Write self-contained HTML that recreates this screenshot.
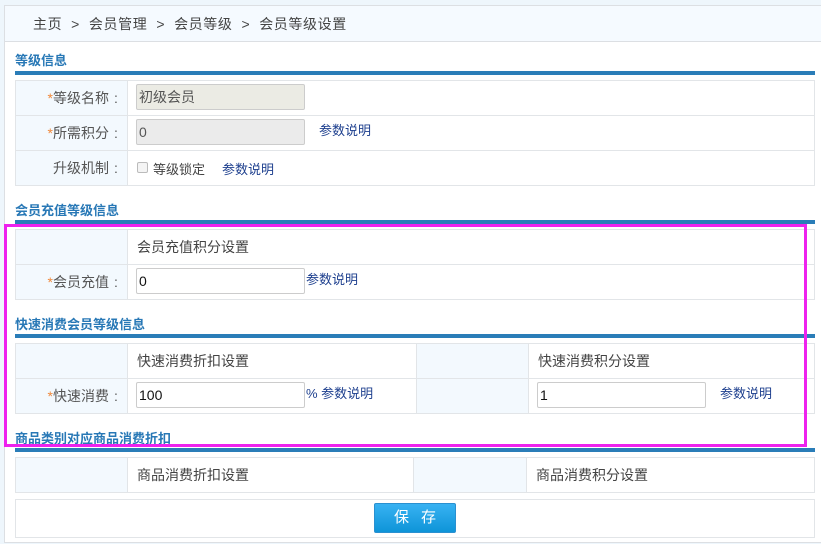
<!DOCTYPE html>
<html><head><meta charset="utf-8"><style>
*{margin:0;padding:0;box-sizing:border-box}
body{width:821px;height:544px;background:#eef6fc;position:relative;overflow:hidden;font-family:"Liberation Sans","Noto Sans CJK SC",sans-serif;font-size:14px;color:#444}
.a{position:absolute}
.panel{left:4px;top:5px;width:830px;height:538px;background:#fff;border:1px solid #dcdfe3}
.bc{left:5px;top:6px;width:830px;height:36px;background:#f5faff;border-bottom:1px solid #dcdfe3;font-size:14px;color:#444;line-height:36px;padding-left:28px;letter-spacing:0.6px}
.st{left:15px;font-weight:bold;color:#2878b6;font-size:13px}
.bar{left:15px;width:800px;height:4px;background:#2a7db8}
.c{border:1px solid #e2e5e8;background:#fff}
.l{background:#f3f9fe}
.lbl{text-align:right;padding-right:4px;color:#555;font-size:14px}
.co{display:inline-block;width:14px;text-align:center}
.s{color:#f0883a}
.in{border:1px solid #ccc;border-radius:2px;background:#fff;height:26px;line-height:24px;padding-left:2px;color:#111;font-size:14px}
.lk{color:#1d3f8e;font-size:13px}
.btn{left:374px;top:503px;width:82px;height:30px;background:linear-gradient(#38b2f2,#0e94d8);border:1px solid #2a90d0;border-radius:2px;color:#fff;font-size:15px;text-align:center;line-height:28px;letter-spacing:12px;padding-left:12px}
.mag{left:4px;top:224px;width:803px;height:223px;border:3px solid #ee22ee}
</style></head><body>
<div class="a panel"></div>
<div class="a bc">主页 &nbsp;&gt;&nbsp; 会员管理 &nbsp;&gt;&nbsp; 会员等级 &nbsp;&gt;&nbsp; 会员等级设置</div>

<div class="a st" style="top:50px">等级信息</div>
<div class="a bar" style="top:71px"></div>
<div class="a c l lbl" style="left:15px;top:80px;width:113px;height:36px;line-height:34px"><span class="s">*</span>等级名称<span class="co">:</span></div>
<div class="a c" style="left:127px;top:80px;width:688px;height:36px"></div>
<div class="a in" style="left:136px;top:84px;width:169px;background:#ebebe4;color:#555">初级会员</div>
<div class="a c l lbl" style="left:15px;top:115px;width:113px;height:36px;line-height:34px"><span class="s">*</span>所需积分<span class="co">:</span></div>
<div class="a c" style="left:127px;top:115px;width:688px;height:36px"></div>
<div class="a in" style="left:136px;top:119px;width:169px;background:#ebebeb;color:#555">0</div>
<div class="a lk" style="left:319px;top:120px">参数说明</div>
<div class="a c l lbl" style="left:15px;top:150px;width:113px;height:36px;line-height:34px">升级机制<span class="co">:</span></div>
<div class="a c" style="left:127px;top:150px;width:688px;height:36px"></div>
<div class="a" style="left:137px;top:162px;width:11px;height:11px;border:1px solid #bbb;border-radius:2px;background:#f4f4f4"></div>
<div class="a" style="left:153px;top:159px;font-size:13px">等级锁定</div>
<div class="a lk" style="left:222px;top:159px">参数说明</div>

<div class="a st" style="top:200px">会员充值等级信息</div>
<div class="a bar" style="top:220px"></div>
<div class="a c l" style="left:15px;top:229px;width:113px;height:36px"></div>
<div class="a c" style="left:127px;top:229px;width:688px;height:36px;line-height:34px;padding-left:9px">会员充值积分设置</div>
<div class="a c l lbl" style="left:15px;top:264px;width:113px;height:36px;line-height:34px"><span class="s">*</span>会员充值<span class="co">:</span></div>
<div class="a c" style="left:127px;top:264px;width:688px;height:36px"></div>
<div class="a in" style="left:136px;top:268px;width:169px">0</div>
<div class="a lk" style="left:306px;top:269px">参数说明</div>

<div class="a st" style="top:314px">快速消费会员等级信息</div>
<div class="a bar" style="top:334px"></div>
<div class="a c l" style="left:15px;top:343px;width:113px;height:36px"></div>
<div class="a c" style="left:127px;top:343px;width:290px;height:36px;line-height:34px;padding-left:9px">快速消费折扣设置</div>
<div class="a c l" style="left:416px;top:343px;width:113px;height:36px"></div>
<div class="a c" style="left:528px;top:343px;width:287px;height:36px;line-height:34px;padding-left:9px">快速消费积分设置</div>
<div class="a c l lbl" style="left:15px;top:378px;width:113px;height:36px;line-height:34px"><span class="s">*</span>快速消费<span class="co">:</span></div>
<div class="a c" style="left:127px;top:378px;width:290px;height:36px"></div>
<div class="a in" style="left:136px;top:382px;width:169px">100</div>
<div class="a lk" style="left:306px;top:383px">% 参数说明</div>
<div class="a c l" style="left:416px;top:378px;width:113px;height:36px"></div>
<div class="a c" style="left:528px;top:378px;width:287px;height:36px"></div>
<div class="a in" style="left:537px;top:382px;width:169px">1</div>
<div class="a lk" style="left:720px;top:383px">参数说明</div>

<div class="a st" style="top:428px">商品类别对应商品消费折扣</div>
<div class="a bar" style="top:448px"></div>
<div class="a c l" style="left:15px;top:457px;width:113px;height:36px"></div>
<div class="a c" style="left:127px;top:457px;width:287px;height:36px;line-height:34px;padding-left:9px">商品消费折扣设置</div>
<div class="a c l" style="left:413px;top:457px;width:114px;height:36px"></div>
<div class="a c" style="left:526px;top:457px;width:289px;height:36px;line-height:34px;padding-left:9px">商品消费积分设置</div>
<div class="a c" style="left:15px;top:499px;width:800px;height:39px"></div>
<div class="a btn">保存</div>

<div class="a mag"></div>
</body></html>
